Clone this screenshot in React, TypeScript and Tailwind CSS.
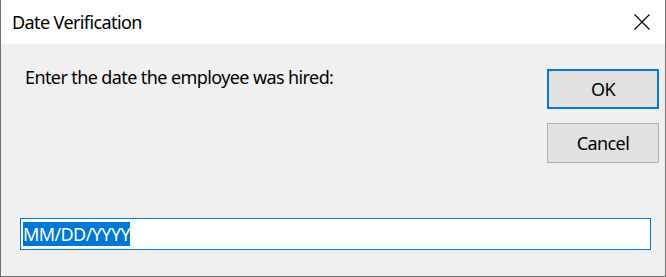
export default function App() {
  return (
    <div
      className="w-[666px] h-[277px] flex flex-col bg-[#f0f0f0] border-x border-b border-[#6f6f6f] text-black tracking-[-0.6px]"
      style={{ fontFamily: '"Noto Sans", "Open Sans", sans-serif' }}
    >
      <div className="h-[44px] shrink-0 bg-white flex items-center justify-between">
        <span className="pl-[11px] text-[18px] leading-none">Date Verification</span>
        <div className="w-[46px] h-[44px] flex items-center justify-center">
          <svg width="16" height="16" viewBox="0 0 16 16" className="text-black">
            <path d="M0.5 0.5 L15.5 15.5 M15.5 0.5 L0.5 15.5" stroke="currentColor" strokeWidth="1.1" fill="none" />
          </svg>
        </div>
      </div>
      <div className="flex-1 flex flex-col">
        <div className="flex justify-between">
          <div className="pl-[24px] pt-[21px] text-[18px] leading-[24px]">Enter the date the employee was hired:</div>
          <div className="flex flex-col gap-[14px] pt-[25px] pr-[6px]">
            <button className="w-[112px] h-[40px] bg-[#e1e1e1] border-2 border-[#0078d7] text-[18px] leading-none">OK</button>
            <button className="w-[112px] h-[40px] bg-[#e1e1e1] border border-[#adadad] text-[18px] leading-none">Cancel</button>
          </div>
        </div>
        <div className="mt-auto mb-[26px] ml-[19px] mr-[14px] h-[32px] bg-white border border-[#0078d7] flex items-center px-[2px]">
          <span className="bg-[#0078d7] text-white text-[18px] leading-[24px]">MM/DD/YYYY</span>
        </div>
      </div>
    </div>
  );
}
